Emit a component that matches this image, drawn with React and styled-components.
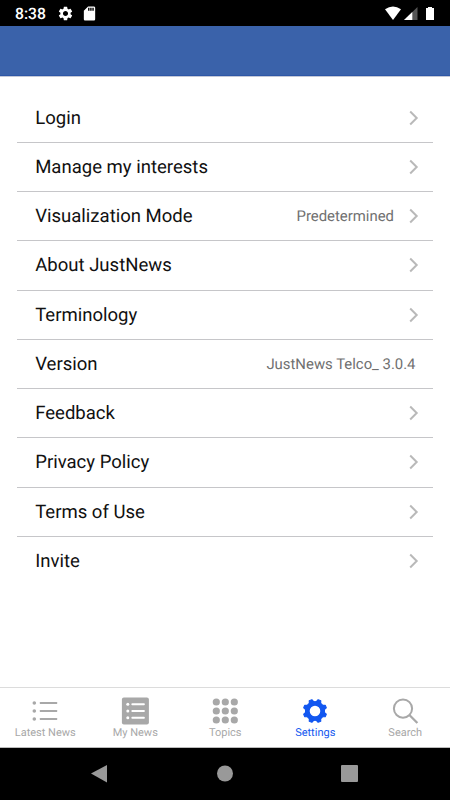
import React from "react";
import styled, { createGlobalStyle } from "styled-components";
import { MdSettings, MdSdCard } from "react-icons/md";

const GlobalStyle = createGlobalStyle`
  * {
    box-sizing: border-box;
  }

  body {
    margin: 0;
    background: #fff;
    font-family: Roboto, "Liberation Sans", sans-serif;
    text-rendering: geometricPrecision;
  }

  svg {
    display: block;
  }
`;

const Screen = styled.div`
  width: 450px;
  height: 800px;
  display: flex;
  flex-direction: column;
  overflow: hidden;
  background: #fff;
`;

const StatusBar = styled.div`
  height: 26px;
  display: flex;
  align-items: center;
  padding: 1px 15px 0 15px;
  background: #000;
  color: #fff;
`;

const Clock = styled.span`
  width: 42px;
  font-size: 15.7px;
  font-weight: 500;
  line-height: 20px;
`;

const StatusIcons = styled.div`
  display: flex;
  align-items: center;
  gap: 7px;
`;

const StatusRight = styled.div`
  display: flex;
  margin-left: auto;
`;

const Header = styled.div`
  height: 51px;
  background: #3a62aa;
  border-bottom: 1px solid #c3c8d8;
  box-shadow: inset 0 -1px 0 #2e57a6;
`;

const List = styled.ul`
  flex: 1;
  list-style: none;
  margin: 0;
  padding: 16.5px 17px 0 17.4px;
`;

const Row = styled.li`
  height: 49.25px;
  display: flex;
  align-items: center;
  padding: 0 14px 0 17.8px;
  border-bottom: 1px solid ${(props) => (props.$last ? "transparent" : "#c6c6c9")};
`;

const RowTitle = styled.span`
  flex: 1;
  color: #111;
  font-size: 18.55px;
  line-height: 24px;
`;

const RowValue = styled.span`
  margin-right: ${(props) => (props.$alone ? "3.5px" : "15px")};
  color: #707070;
  font-size: 14.9px;
  line-height: 20px;
`;

const TabBar = styled.nav`
  height: 61px;
  display: flex;
  border-top: 1px solid #dcdcdc;
  border-bottom: 1px solid #bbb;
`;

const Tab = styled.div`
  flex: 1;
  display: flex;
  flex-direction: column;
  align-items: center;
  padding-top: 9px;
  color: ${(props) => (props.$active ? "#1257f0" : "#a8a8a8")};
`;

const TabLabel = styled.span`
  margin-top: 1px;
  padding-left: 0.5px;
  font-size: 11px;
  line-height: 14px;
`;

const NavBar = styled.div`
  height: 52px;
  display: flex;
  align-items: center;
  justify-content: center;
  background: #000;
`;

const rows = [
  { title: "Login", arrow: true },
  { title: "Manage my interests", arrow: true },
  { title: "Visualization Mode", value: "Predetermined", arrow: true },
  { title: "About JustNews", arrow: true },
  { title: "Terminology", arrow: true },
  { title: "Version", value: "JustNews Telco_ 3.0.4" },
  { title: "Feedback", arrow: true },
  { title: "Privacy Policy", arrow: true },
  { title: "Terms of Use", arrow: true },
  { title: "Invite", arrow: true },
];

const dots = [5, 14, 23];

function Chevron() {
  return (
    <svg width="10" height="16" viewBox="0 0 10 16" fill="none" stroke="#b9b9b9" strokeWidth="2">
      <path d="M1.2 1.5 7.7 8 1.2 14.5" />
    </svg>
  );
}

function ListIcon() {
  return (
    <svg width="28" height="28" viewBox="0 0 28 28" fill="currentColor">
      {[6, 14, 22].map((y) => (
        <g key={y}>
          <circle cx="3.3" cy={y} r="1.8" />
          <rect x="8.8" y={y - 1} width="17.4" height="2" rx="0.6" />
        </g>
      ))}
    </svg>
  );
}

function BoxListIcon() {
  return (
    <svg width="28" height="28" viewBox="0 0 28 28">
      <rect x="0.9" y="0.5" width="27" height="27" rx="2" fill="#a8a8a8" />
      {[7.2, 14, 20.8].map((y) => (
        <g key={y} fill="#fff">
          <circle cx="6.8" cy={y} r="1.5" />
          <rect x="10.4" y={y - 1} width="13.4" height="2" rx="0.8" />
        </g>
      ))}
    </svg>
  );
}

function GridIcon() {
  return (
    <svg width="28" height="28" viewBox="0 0 28 28" fill="currentColor">
      {dots.map((y) =>
        dots.map((x) => <circle key={x + "-" + y} cx={x + 0.3} cy={y} r="3.6" />)
      )}
    </svg>
  );
}

function GearIcon() {
  return (
    <svg width="28" height="28" viewBox="0 0 28 28" fill="none" stroke="currentColor">
      <circle cx="14" cy="14" r="7.7" strokeWidth="4.8" />
      {[0, 1, 2, 3, 4, 5, 6, 7].map((i) => (
        <path
          key={i}
          d="M11.7 4.9 12.6 2.4H15.4L16.3 4.9Z"
          fill="currentColor"
          strokeWidth="1.2"
          strokeLinejoin="round"
          transform={`rotate(${22.5 + i * 45} 14 14)`}
        />
      ))}
    </svg>
  );
}

function SearchIcon() {
  return (
    <svg width="28" height="28" viewBox="0 0 28 28" fill="none" stroke="currentColor" strokeWidth="2">
      <circle cx="12" cy="11.6" r="9.1" />
      <path d="M18.4 18 26.4 26" strokeWidth="2.3" />
    </svg>
  );
}

const tabs = [
  { label: "Latest News", icon: <ListIcon /> },
  { label: "My News", icon: <BoxListIcon /> },
  { label: "Topics", icon: <GridIcon /> },
  { label: "Settings", icon: <GearIcon />, active: true },
  { label: "Search", icon: <SearchIcon /> },
];

export default function App() {
  return (
    <>
      <GlobalStyle />
      <Screen>
        <StatusBar>
          <Clock>8:38</Clock>
          <StatusIcons>
            <MdSettings size={17} />
            <MdSdCard size={17} />
          </StatusIcons>
          <StatusRight>
            <svg width="52" height="16" viewBox="0 0 52 16" fill="#fff">
              <path d="M2 3.2Q10 -2 18 3.2L10 14Z" />
              <path d="M21 14 34.5 1V14Z" fill="#555" />
              <path d="M21 14 29.3 6V14Z" />
              <path d="M43 2h2V1h4v1h2v12h-8Z" />
            </svg>
          </StatusRight>
        </StatusBar>

        <Header />

        <List>
          {rows.map((row, i) => (
            <Row key={row.title} $last={i === rows.length - 1}>
              <RowTitle>{row.title}</RowTitle>
              {row.value && <RowValue $alone={!row.arrow}>{row.value}</RowValue>}
              {row.arrow && <Chevron />}
            </Row>
          ))}
        </List>

        <TabBar>
          {tabs.map((tab) => (
            <Tab key={tab.label} $active={tab.active}>
              {tab.icon}
              <TabLabel>{tab.label}</TabLabel>
            </Tab>
          ))}
        </TabBar>

        <NavBar>
          <svg width="450" height="52" viewBox="0 0 450 52" fill="#999">
            <path d="M91 25.5 107 17V34.5Z" />
            <circle cx="225" cy="25.5" r="8" />
            <rect x="341" y="17" width="17" height="17" rx="1" />
          </svg>
        </NavBar>
      </Screen>
    </>
  );
}
